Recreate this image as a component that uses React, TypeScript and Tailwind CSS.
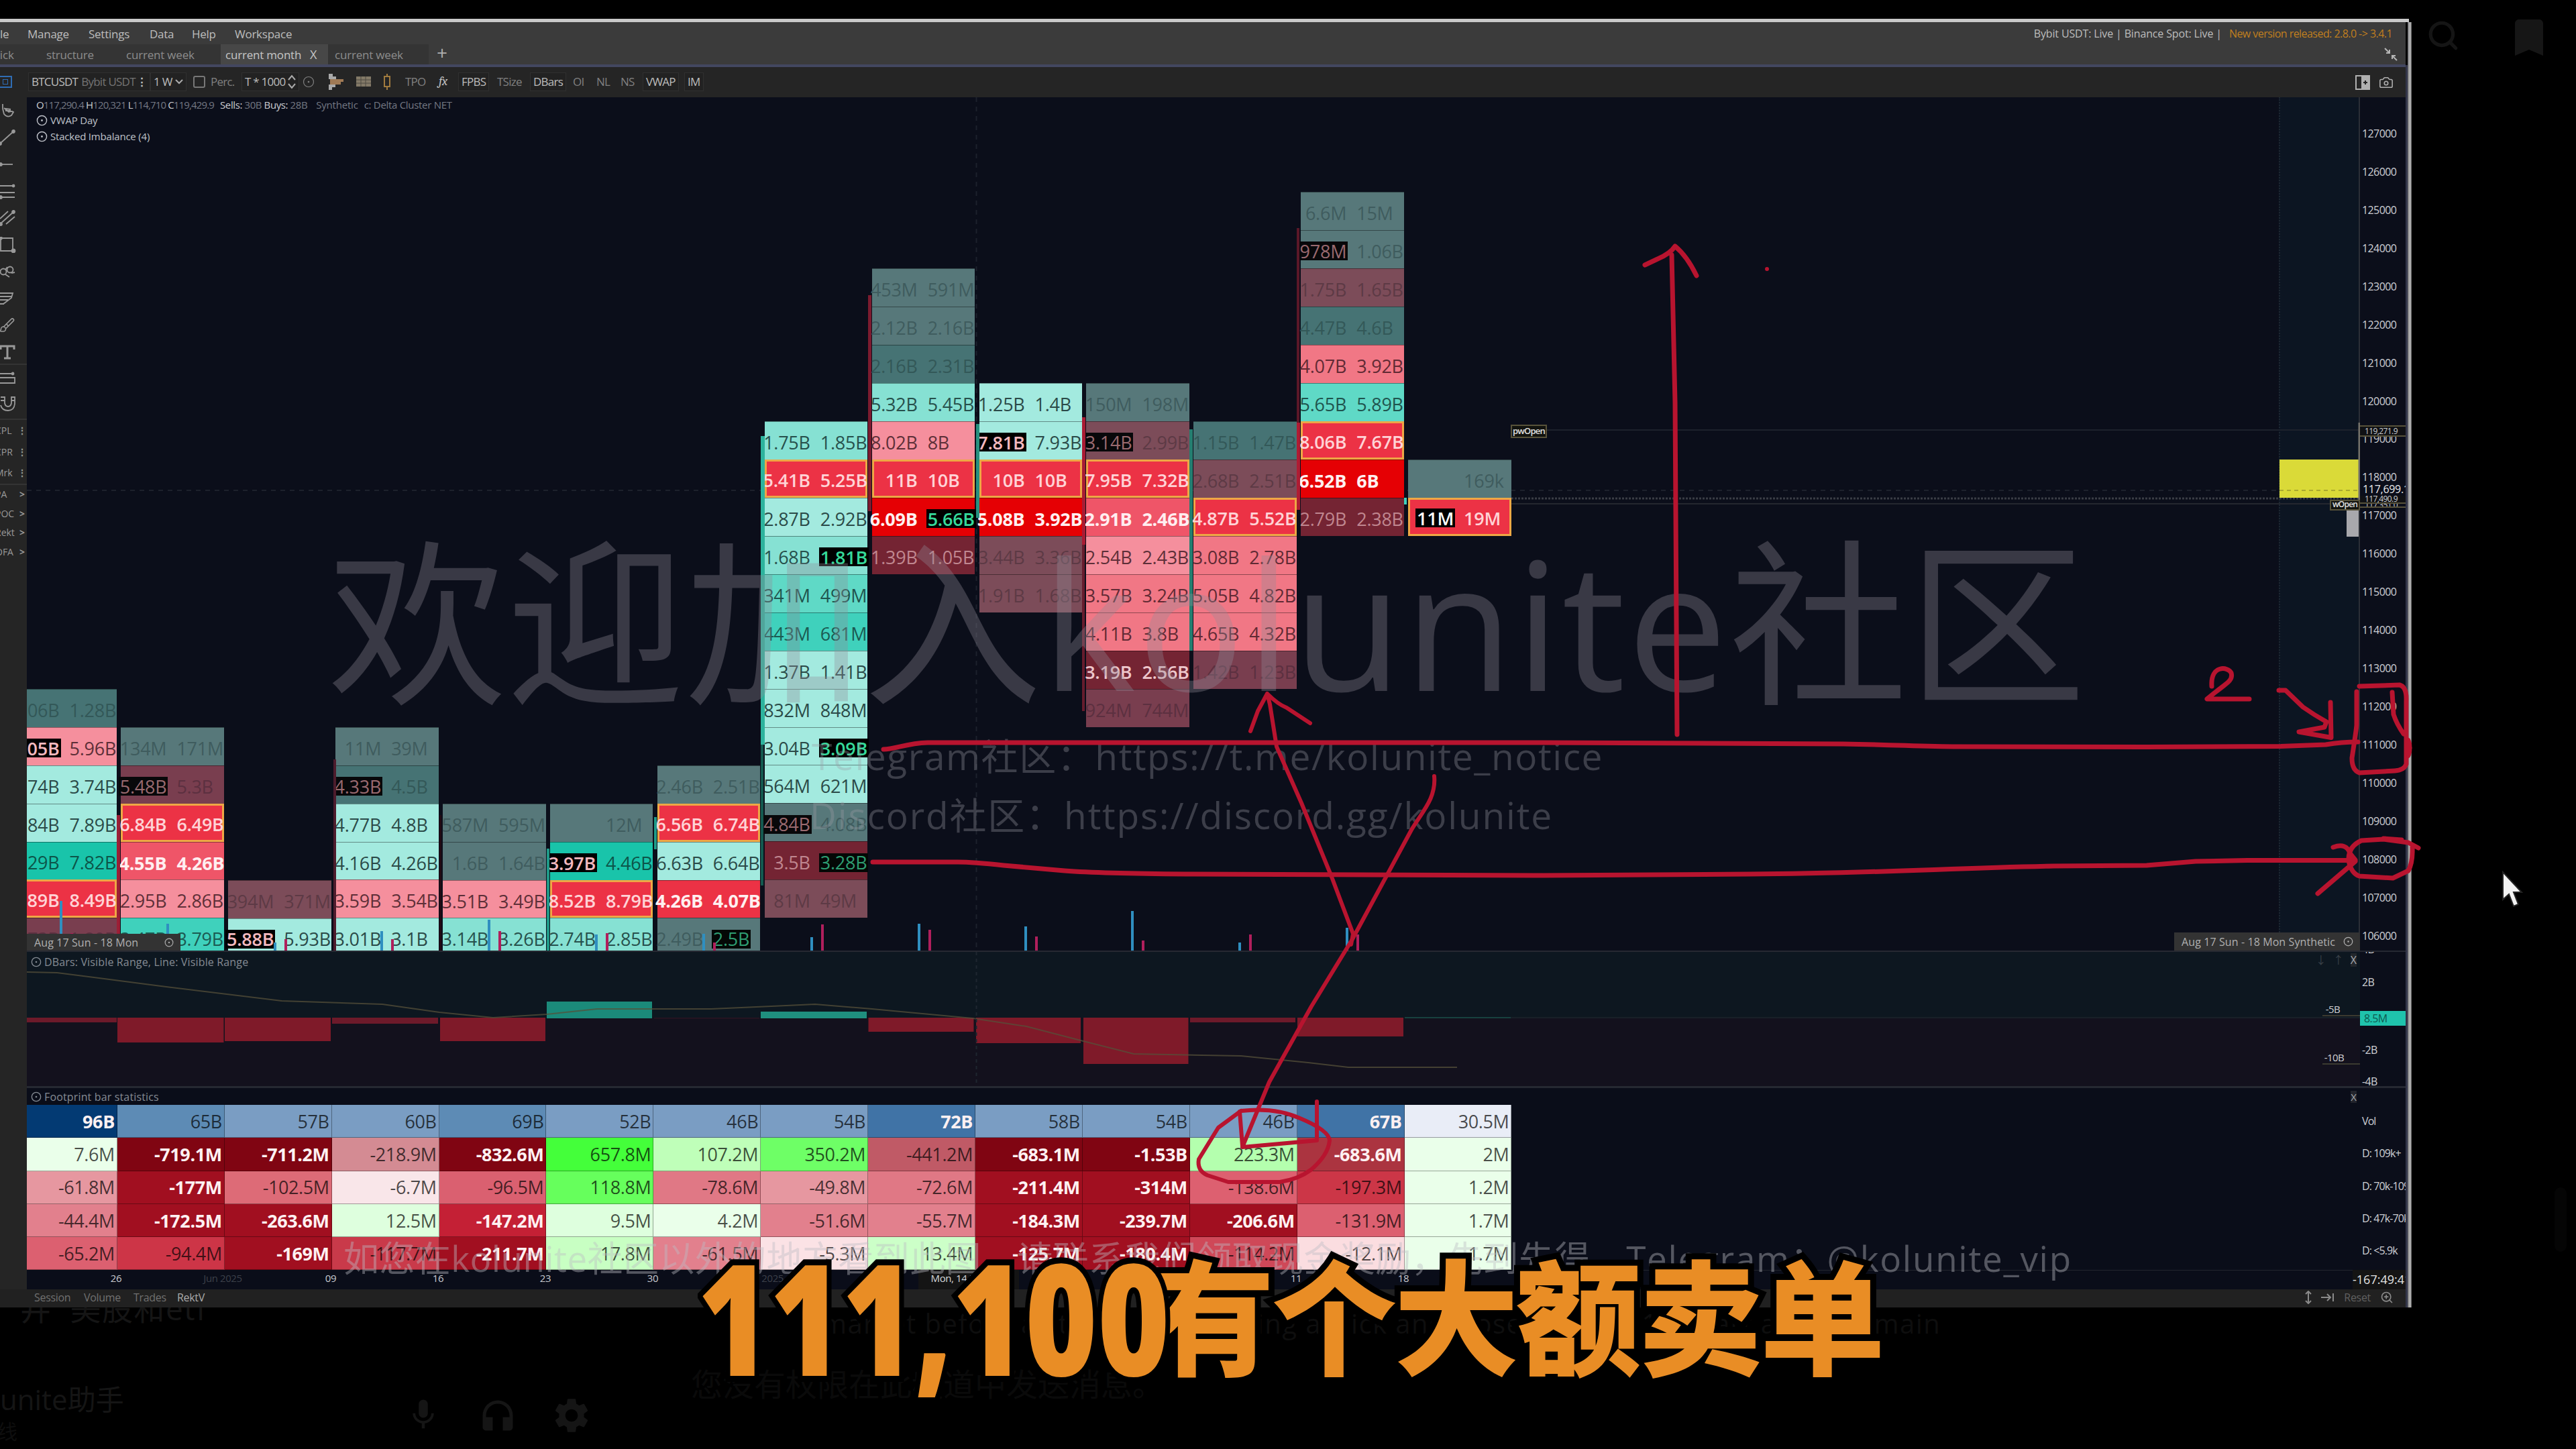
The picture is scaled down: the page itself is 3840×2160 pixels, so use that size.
import React from "react";
import { Search, Camera, CircleDot, Brush, ZoomIn } from "lucide-react";
import { MdMic, MdHeadphones, MdSettings, MdBookmark } from "react-icons/md";

/* ---------- footprint cells ---------- */

const KIND: Record<string, string> = {
  L: "bg-[#a3eadf] text-[#2b4a48]",
  T1: "bg-[#86e1d3] text-[#27504c]",
  T2: "bg-[#5fd9c6] text-[#1f544e]",
  T3: "bg-[#3fd1bc] text-[#1b5a52]",
  T: "bg-[#19c4aa] text-[#0c5549]",
  D: "bg-[#57787a] text-[#3f5c5e]",
  DT: "bg-[#467374] text-[#335858]",
  P: "bg-[#f58f9d] text-[#5e2f38]",
  P2: "bg-[#f17785] text-[#612a34]",
  R5: "bg-[#ef5568] text-[#ffeef0] font-bold",
  R: "bg-[#ec3245] text-[#ffd3d6] font-semibold border-[3px]! border-[#eea745]!",
  RB: "bg-[#ec3245] text-[#fff0f0] font-bold",
  X: "bg-[#e50004] text-[#fff0f0] font-bold",
  M: "bg-[#7c4c59] text-[#5d3a45]",
  M2: "bg-[#793e4f] text-[#5c3040]",
  DR: "bg-[#742433] text-[#c08790]",
  DB: "bg-[#742433] text-[#edc6cb] font-semibold",
};

const MARK: Record<string, string> = {
  k: "bg-black text-[#f3b9bf] font-semibold",
  d: "bg-[#08080a] text-[#9a6a70]",
  w: "bg-black text-white",
  g: "bg-black text-[#35d99a] font-semibold",
  h: "bg-[#040806] text-[#2e9e72]",
};

type Cell = [kind: string, sell: string, buy: string, sellMark?: string, buyMark?: string];
type Column = { row: number; cells: Cell[] };

const COLUMNS: Column[] = [
  { row: 13, cells: [["DT", "1.06B", "1.28B"], ["P", "6.05B", "5.96B", "k"], ["L", "3.74B", "3.74B"], ["L", "7.84B", "7.89B"], ["T", "7.29B", "7.82B"], ["R", "8.89B", "8.49B"], ["M2", "1.73B", "1.80B"]] },
  { row: 14, cells: [["D", "134M", "171M"], ["M2", "5.48B", "5.3B", "d"], ["R", "6.84B", "6.49B"], ["R5", "4.55B", "4.26B"], ["P", "2.95B", "2.86B"], ["T3", "3.47B", "3.79B"]] },
  { row: 18, cells: [["M", "394M", "371M"], ["L", "5.88B", "5.93B", "k"]] },
  { row: 14, cells: [["D", "11M", "39M"], ["DT", "4.33B", "4.5B", "d"], ["L", "4.77B", "4.8B"], ["L", "4.16B", "4.26B"], ["P", "3.59B", "3.54B"], ["L", "3.01B", "3.1B"]] },
  { row: 16, cells: [["D", "587M", "595M"], ["D", "1.6B", "1.64B"], ["P", "3.51B", "3.49B"], ["T1", "3.14B", "3.26B"]] },
  { row: 16, cells: [["D", "", "12M"], ["T", "3.97B", "4.46B", "k"], ["R", "8.52B", "8.79B"], ["T1", "2.74B", "2.85B"]] },
  { row: 15, cells: [["D", "2.46B", "2.51B"], ["R", "6.56B", "6.74B"], ["L", "6.63B", "6.64B"], ["RB", "4.26B", "4.07B"], ["D", "2.49B", "2.5B", "", "h"]] },
  { row: 6, cells: [["T1", "1.75B", "1.85B"], ["R", "5.41B", "5.25B"], ["L", "2.87B", "2.92B"], ["T1", "1.68B", "1.81B", "", "g"], ["T2", "341M", "499M"], ["T3", "443M", "681M"], ["L", "1.37B", "1.41B"], ["L", "832M", "848M"], ["L", "3.04B", "3.09B", "", "g"], ["L", "564M", "621M"], ["D", "4.84B", "4.08B", "d"], ["DR", "3.5B", "3.28B", "", "h"], ["M", "81M", "49M"]] },
  { row: 2, cells: [["D", "453M", "591M"], ["D", "2.12B", "2.16B"], ["DT", "2.16B", "2.31B"], ["T1", "5.32B", "5.45B"], ["P", "8.02B", "8B"], ["R", "11B", "10B"], ["X", "6.09B", "5.66B", "", "g"], ["DR", "1.39B", "1.05B"]] },
  { row: 5, cells: [["L", "1.25B", "1.4B"], ["L", "7.81B", "7.93B", "k"], ["R", "10B", "10B"], ["X", "5.08B", "3.92B"], ["M", "3.44B", "3.36B"], ["M", "1.91B", "1.68B"]] },
  { row: 5, cells: [["D", "150M", "198M"], ["M", "3.14B", "2.99B", "d"], ["R", "7.95B", "7.32B"], ["R5", "2.91B", "2.46B"], ["P", "2.54B", "2.43B"], ["P2", "3.57B", "3.24B"], ["P2", "4.11B", "3.8B"], ["DB", "3.19B", "2.56B"], ["M2", "924M", "744M"]] },
  { row: 6, cells: [["DT", "1.15B", "1.47B"], ["M", "2.68B", "2.51B"], ["R", "4.87B", "5.52B"], ["P2", "3.08B", "2.78B"], ["P2", "5.05B", "4.82B"], ["P2", "4.65B", "4.32B"], ["M2", "1.42B", "1.23B"]] },
  { row: 0, cells: [["D", "6.6M", "15M"], ["D", "978M", "1.06B", "d"], ["M", "1.75B", "1.65B"], ["DT", "4.47B", "4.6B"], ["P2", "4.07B", "3.92B"], ["T2", "5.65B", "5.89B"], ["R", "8.06B", "7.67B"], ["X", "6.52B", "6B"], ["DR", "2.79B", "2.38B"]] },
  { row: 7, cells: [["D", "", "169k"], ["R", "11M", "19M", "w"]] },
];

const ROW_H = 56.98;

function Num({ text, mark }: { text: string; mark?: string }) {
  return (
    <span className={`flex h-[28px] items-center whitespace-nowrap ${mark ? "px-[2px] -mx-[2px] " + MARK[mark] : ""}`}>{text}</span>
  );
}

function FootprintColumn({ col }: { col: Column }) {
  return (
    <div className="w-[153.5px] shrink-0" style={{ paddingTop: 140.9 + col.row * ROW_H }}>
      {col.cells.map(([kind, a, b, am, bm], i) => {
        const framed = kind === "R";
        return (
          <div key={i} style={{ height: ROW_H }} className={`flex items-center border-t-[1.5px] border-black/40 ${framed ? "pt-[4px]" : "pt-[5px]"} ${KIND[kind]}`}>
            <div className={`flex shrink-0 justify-end ${framed ? "w-[65px]" : "w-[68px]"}`}><Num text={a} mark={am} /></div>
            <div className="ml-[15px] flex"><Num text={b} mark={bm} /></div>
          </div>
        );
      })}
    </div>
  );
}

/* ---------- bar statistics ---------- */

type Stat = [value: string, color: string, bold?: 1];
const V = "#7a9dc3", DK = "#800512", B = "#a10f20", G = "#eaffea";
const STATS: Stat[][] = [
  [["96B", "#033a73", 1], ["65B", "#5d8bb5"], ["57B", V], ["60B", V], ["69B", "#5d8bb5"], ["52B", V], ["46B", V], ["54B", V], ["72B", "#4073a6", 1], ["58B", V], ["54B", V], ["46B", V], ["67B", "#4073a6", 1], ["30.5M", "#e9edf7"]],
  [["7.6M", G], ["-719.1M", DK, 1], ["-711.2M", DK, 1], ["-218.9M", "#d48b93"], ["-832.6M", DK, 1], ["657.8M", "#44ff3a"], ["107.2M", "#bfffb9"], ["350.2M", "#6eff66"], ["-441.2M", "#c05a66"], ["-683.1M", DK, 1], ["-1.53B", DK, 1], ["223.3M", "#b4ffae"], ["-683.6M", "#ab3440", 1], ["2M", G]],
  [["-61.8M", "#e697a0"], ["-177M", B, 1], ["-102.5M", "#dd6b77"], ["-6.7M", "#f9e6e9"], ["-96.5M", "#da6070"], ["118.8M", "#66ff5c"], ["-78.6M", "#e07885"], ["-49.8M", "#e697a0"], ["-72.6M", "#e07885"], ["-211.4M", B, 1], ["-314M", B, 1], ["-138.6M", "#dd6070"], ["-197.3M", "#cc3647"], ["1.2M", G]],
  [["-44.4M", "#e2808d"], ["-172.5M", B, 1], ["-263.6M", B, 1], ["12.5M", "#deffde"], ["-147.2M", "#c42035", 1], ["9.5M", "#deffde"], ["4.2M", G], ["-51.6M", "#e2808d"], ["-55.7M", "#e2808d"], ["-184.3M", B, 1], ["-239.7M", B, 1], ["-206.6M", B, 1], ["-131.9M", "#dc6070"], ["1.7M", G]],
  [["-65.2M", "#dc6070"], ["-94.4M", "#cd3547"], ["-169M", B, 1], ["-117.7M", "#c93a4a"], ["-211.7M", B, 1], ["17.8M", "#c8ffc3"], ["-61.5M", "#e2808d"], ["-5.3M", "#fbe2e5"], ["13.4M", "#ccffc8"], ["-125.7M", B, 1], ["-180.4M", B, 1], ["-114.2M", "#cf4858"], ["-12.1M", "#fbdde0"], ["1.7M", G]],
];

/* ---------- small helpers ---------- */

/** A text row whose items start at the given offsets. */
function Row({ items, className = "", end = 1400 }: { items: [number, React.ReactNode, string?][]; className?: string; end?: number }) {
  const start = items[0][0];
  return (
    <div className={`flex items-center whitespace-nowrap ${className}`} style={{ marginLeft: start }}>
      {items.map(([x, node, cls], i) => (
        <div key={i} className={`flex shrink-0 items-center ${cls ?? ""}`} style={{ width: (items[i + 1]?.[0] ?? end) - x }}>{node}</div>
      ))}
    </div>
  );
}

function Boxed({ children, className = "" }: { children: React.ReactNode; className?: string }) {
  return <span className={`-ml-[5px] flex h-[28px] items-center border border-[#303030] bg-[#222222] px-[4px] text-[#bcbcbc] ${className}`}>{children}</span>;
}

/* drawing tools of the left rail, each in a 24 x 24 box cut by the window's left edge */
const TOOLS: React.ReactNode[] = [
  <path key="hand" d="M4 2v7M4 9l2 8q5 6 11 2l3-5q-3-2-7 0L6 8M8 9l8 1M8 12l8 0" />,
  <g key="line"><path d="M0 21L20 3" /><circle cx="20" cy="3" r="2" fill="currentColor" /><circle cx="0" cy="21" r="2" fill="currentColor" /></g>,
  <g key="ray"><path d="M0 12H19" /><circle cx="1" cy="12" r="2" fill="currentColor" /></g>,
  <g key="levels"><path d="M0 4H22M0 14H22M0 21H22" /><circle cx="20" cy="4" r="1.500" fill="currentColor" /><circle cx="1" cy="21" r="2" fill="currentColor" /></g>,
  <g key="channel"><path d="M0 13L12 2M0 21L20 3M9 21L22 10" /><circle cx="20" cy="3" r="2" fill="currentColor" /><circle cx="1" cy="21" r="2" fill="currentColor" /></g>,
  <g key="rect"><path d="M1 2H19V21H1Z" /><circle cx="1" cy="2" r="2" fill="currentColor" /><circle cx="20" cy="21" r="2.500" fill="currentColor" /></g>,
  <g key="spline"><circle cx="5" cy="12" r="4.500" /><circle cx="15" cy="9" r="4.500" /><path d="M8 16L14 20M17 14L22 13M11 5L8 9" /></g>,
  <path key="wedge" d="M0 4H19L17 11L5 20H0M0 9H18M0 14H12M0 20H6" />,
  null,
  <path key="text" d="M1 8V3H21V8M11 3V21M6 21H16" strokeWidth="3" />,
];

function Tool({ children, className = "" }: { children: React.ReactNode; className?: string }) {
  return (
    <div className={`flex items-center ${className}`}>
      <svg width="24" height="24" viewBox="0 0 24 24" fill="none" stroke="currentColor" strokeWidth="1.8">{children}</svg>
    </div>
  );
}

function SideBar() {
  return (
    <div className="flex w-[40px] shrink-0 flex-col overflow-hidden bg-[#252525] text-[14px] font-medium text-[#999999]">
      {TOOLS.map((t, i) =>
        t ? <Tool key={i} className="h-[40px]">{t}</Tool> : <div key={i} className="-ml-[2px] flex h-[40px] items-center"><Brush width={25} height={24} strokeWidth={1.6} /></div>
      )}
      <div className="-mt-[3px] mb-[1px] h-[2px] bg-[#343434]" />
      <Tool className="h-[38px]"><path d="M0 5H19M0 11H22V19H0" /><circle cx="19" cy="5" r="1.500" fill="currentColor" /></Tool>
      <Tool className="h-[38px]"><path d="M1 2H7V11Q8 16 12 16Q16 16 17 11V2H22V12Q21 22 12 22Q3 22 1 14M1 7H7M17 7H22" /></Tool>
      <div className="mt-[3px] h-[2px] bg-[#343434]" />
      {["CPL", "CPR", "Mrk"].map((t) => (
        <div key={t} className="-ml-[7px] flex h-[31.5px] items-center whitespace-nowrap"><span className="w-[33px]">{t}</span><b>⋮</b></div>
      ))}
      <div className="h-[2px] bg-[#343434]" />
      {["PA", "POC", "Rekt", "OFA"].map((t) => (
        <div key={t} className="-ml-[7px] flex h-[28.5px] items-center whitespace-nowrap"><span className="w-[36px]">{t}</span><b>&gt;</b></div>
      ))}
    </div>
  );
}

/* ---------- panels ---------- */

const WICKS: [number, number, number, number, string][] = [
  [174, 1215, 5, 202, "#9c1f36"], [497, 1132, 4, 285, "#4d1c2c"], [815, 1265, 4, 152, "#1f9a88"], [975, 1218, 4, 48, "#1f9a88"],
  [1134, 650, 6, 460, "#2db39d"], [1134, 1110, 4, 210, "#14594f"], [1294, 440, 5, 322, "#7c1b2f"], [1455, 632, 5, 140, "#27907f"], [1613, 622, 5, 190, "#a81c34"], [1613, 812, 4, 248, "#661c2d"],
  [1773, 640, 5, 330, "#257e70"], [1933, 340, 4, 290, "#5b1828"], [1933, 630, 5, 130, "#b01c33"], [2093, 742, 4, 10, "#3fd1bc"], [655, 1215, 3, 202, "#220a14"],
];

const TICKS: [number, number, number][] = [
  [91, 1343, 1391], [250, 1377, 1410], [410, 1405, 1400], [569, 1388, 1400], [729, 1371, 1388], [889, 1393, 1391], [1049, 1392, 1405],
  [1210, 1397, 1378], [1370, 1377, 1386], [1529, 1381, 1396], [1688, 1358, 1402], [1848, 1405, 1393], [2008, 1383, 1393],
];

function Lead({ children }: { children: React.ReactNode }) {
  return <b className="font-medium text-[#cbcdd2]">{children}</b>;
}

function Chart() {
  return (
    <div className="relative h-[1272px] overflow-hidden bg-[#0b0e1a]">
      <div className="absolute right-0 top-0 h-full w-[121px] border-l-2 border-dotted border-[#1d2631] bg-[#0c1522]" />
      <svg className="absolute inset-0" width="3478" height="1272" viewBox="40 145 3478 1272">
        <g stroke="#1d212c" strokeWidth="2">
          <path d="M40 731H3518" strokeDasharray="7 7" />
          <path d="M2253 743H3518" stroke="#3a3d45" strokeWidth="3" strokeDasharray="3 2" />
          <path d="M2253 751H3518" stroke="#24272f" />
          <path d="M2305 641H3518" />
          <path d="M1455.500 145V1417" strokeDasharray="7 7" />
        </g>
      </svg>
      <div className="absolute left-[-19.500px] top-0 flex gap-[6.400px] text-[27px] font-medium leading-none tracking-[-0.25px]">
        {COLUMNS.map((c, i) => <FootprintColumn key={i} col={c} />)}
      </div>
      <svg className="absolute inset-0" width="3478" height="1272" viewBox="40 145 3478 1272">
        {WICKS.map(([x, y, w, h, c], i) => <rect key={i} x={x} y={y} width={w} height={h} fill={c} />)}
        {TICKS.map(([x, a, b], i) => (
          <g key={i}>
            <rect x={x - 2} y={a} width="4" height={1417 - a} fill="#2f8fc0" />
            <rect x={x + 14} y={b} width="4" height={1417 - b} fill="#b01f5c" />
          </g>
        ))}
        <rect x="3398" y="685" width="120" height="57" fill="#dada38" />
        <path d="M3398 731H3518" stroke="#a9a92e" strokeWidth="2" strokeDasharray="6 5" />
        <rect x="3498" y="758" width="20" height="42" fill="#a8a8ac" />
        <path d="M3517 145V1417" stroke="#2b2e36" strokeWidth="2" />
        <path d="M3517 630V760" stroke="#75726a" strokeWidth="3" />
      </svg>
      <div className="absolute left-[2212px] top-[488px] flex h-[20px] w-[54px] items-center justify-center border-2 border-[#57523a] bg-[#12130f] pb-[2px] text-[13px] font-semibold leading-none tracking-[-0.8px] text-[#e0e0e0]">pwOpen</div>
      <div className="absolute right-0 top-[600px] flex h-[16px] w-[45px] items-center justify-center border-2 border-[#57523a] bg-[#12130f] pb-[2px] text-[12px] font-semibold leading-none tracking-[-0.8px] text-[#e0e0e0]">wOpen</div>
      <div className="absolute left-[14px] top-0 text-[15px] font-medium leading-[24px] tracking-[-0.2px] text-[#bfc2c9]">
        <div className="flex h-[22px] items-center gap-[5px] tracking-[-0.85px] text-[#747883]">
          <span><Lead>O</Lead>117,290.4 <Lead>H</Lead>120,321 <Lead>L</Lead>114,710 <Lead>C</Lead>119,429.9</span>
          <span className="ml-[4px] tracking-[-0.4px]"><Lead>Sells:</Lead> 30B <Lead>Buys:</Lead> 28B</span>
          <span className="ml-[8px] tracking-[-0.2px]">Synthetic</span><span className="ml-[4px] tracking-[-0.3px]">c: Delta Cluster NET</span>
        </div>
        <div className="flex items-center gap-[4px]"><CircleDot size={17} /> VWAP Day</div>
        <div className="flex items-center gap-[4px]"><CircleDot size={17} /> Stacked Imbalance (4)</div>
      </div>
      <div className="absolute bottom-0 left-0 flex h-[25px] w-[229px] items-center justify-between bg-[#333333] pl-[11px] pr-[10px] text-[16px] font-medium tracking-[0.1px] text-[#b0b0b0]">Aug 17 Sun - 18 Mon <CircleDot size={14} /></div>
      <div className="absolute bottom-0 right-0 flex h-[27px] w-[277px] items-center justify-between bg-[#333333] pl-[11px] pr-[10px] text-[16px] font-medium tracking-[0.1px] text-[#b0b0b0]">Aug 17 Sun - 18 Mon Synthetic <CircleDot size={15} /></div>
    </div>
  );
}

const DELTA: [number, number, number, number, string][] = [
  [40, 1517, 134, 7, "#6d1a2a"], [175, 1517, 158.500, 37, "#7f1a29"], [335, 1517, 158, 35, "#7f1a29"], [495, 1517, 158, 9, "#6d1a2a"], [656, 1517, 157, 35, "#7f1a29"],
  [815, 1493, 157, 25, "#1b8a7a"], [1134, 1508, 158, 10, "#1f8f7f"], [1294.500, 1517, 157, 21, "#7f1a29"], [1455, 1517, 156, 38, "#7f1a29"], [1615, 1517, 156.500, 69, "#7f1a29"],
  [1774, 1517, 157, 7, "#6d1a2a"], [1934, 1517, 158, 28, "#7f1a29"], [2094, 1516, 158, 2, "#17413f"], [975, 1517, 157, 1.500, "#2a1522"],
];

function DeltaPanel() {
  return (
    <div className="relative h-[200px] overflow-hidden bg-[linear-gradient(#0d1720_49%,#13111d_49%)]">
      <svg className="absolute inset-0" width="3478" height="200" viewBox="40 1419 3478 200">
        {DELTA.map(([x, y, w, h, c], i) => <rect key={i} x={x} y={y} width={w} height={h} fill={c} />)}
        <path d="M40 1449L85 1450L140 1457L240 1470L420 1492L570 1497L655 1509L735 1517L815 1512L890 1504L1060 1504L1150 1500L1215 1497L1300 1504L1450 1518L1530 1530L1611 1551L1690 1571L1850 1574L1950 1584L2010 1591H2172" fill="none" stroke="#55503a" strokeWidth="2" opacity=".75" />
        <path d="M1455.500 1419V1619" stroke="#1f2630" strokeWidth="2" strokeDasharray="5 5" />
        <path d="M2252 1517H3518" stroke="#182028" strokeWidth="2" />
        <path d="M3462 1514H3518M3462 1586H3518" stroke="#3b3a30" strokeWidth="2" />
      </svg>
      <div className="absolute left-[6px] top-[3px] flex items-center gap-[4px] text-[16px] font-medium leading-[24px] tracking-[0.15px] text-[#858b93]"><CircleDot size={16} /> DBars: Visible Range, Line: Visible Range</div>
      <div className="absolute right-[30px] top-[76px] text-[15px] font-medium leading-[18px] tracking-[-0.6px] text-[#d0d0d4]">-5B</div>
      <div className="absolute right-[24px] top-[148px] text-[15px] font-medium leading-[18px] tracking-[-0.6px] text-[#d0d0d4]">-10B</div>
      <div className="absolute right-[5px] top-[2px] flex gap-[10px] text-[16px] leading-[20px] text-[#3a4148]"><span>↓</span><span>↑</span><span className="bg-[#22272c] text-[#a5a8ac]">X</span></div>
    </div>
  );
}

function StatsPanel() {
  return (
    <div className="h-[271px] overflow-hidden bg-[#0a0d19]">
      <div className="flex h-[25px] items-center justify-between pl-[6px] pr-[5px] text-[16px] font-medium tracking-[0.15px] text-[#858b93]">
        <span className="flex items-center gap-[4px]"><CircleDot size={16} /> Footprint bar statistics</span>
        <span className="bg-[#22242c] text-[15px] leading-[18px] text-[#a5a8ac]">X</span>
      </div>
      <div className="ml-[-25px] grid w-[2238.500px] grid-cols-14 text-[27px] font-medium leading-none tracking-[-0.4px]">
        {STATS.flatMap((r, y) => r.map(([t, c, bold], x) => (
          <div key={`${y}-${x}`} className={`flex h-[49.300px] items-center justify-end border-b border-r border-black/35 pr-[3px] ${bold ? "font-bold text-[#fff1f2]" : "text-black/70"}`} style={{ backgroundColor: c }}>{t}</div>
        )))}
      </div>
    </div>
  );
}

const DATES: [number, string, string][] = [
  [173, "26", "text-[#c8cad0]"], [332, "Jun 2025", "text-[#3c4049]"], [493, "09", "text-[#c8cad0]"], [653, "16", "text-[#c8cad0]"], [813, "23", "text-[#c8cad0]"],
  [973, "30", "text-[#c8cad0]"], [1142, "Jul 2025", "text-[#3c4049]"], [1444, "Mon, 14 Jul 00:00", "text-[#d5d7db]"], [1613, "21", "text-[#c8cad0]"], [1773, "28", "text-[#c8cad0]"], [1932, "11", "text-[#c8cad0]"], [2092, "18", "text-[#c8cad0]"],
];

function DateAxis() {
  return (
    <div className="relative h-[29px] bg-[#0a0d19] text-[15px] font-medium leading-[24px] tracking-[-0.4px]">
      <div className="absolute right-0 top-0 h-px w-[1265px] bg-[#23262e]" />
      <div className="absolute left-[1329px] top-0 h-[29px] w-[150px] bg-[#141414]" />
      {DATES.map(([x, t, c]) => (
        <span key={x} className={`absolute -translate-x-1/2 whitespace-nowrap ${c}`} style={{ left: x - 40 }}>{t}</span>
      ))}
    </div>
  );
}

function PriceAxis() {
  const prices = Array.from({ length: 22 }, (_, i) => 127000 - i * 1000);
  return (
    <div className="w-[68px] shrink-0 bg-[#0b0e1a] text-[16px] font-medium leading-none tracking-[-0.6px] text-[#cdcfd4]">
      <div className="relative h-[1272px] overflow-hidden pt-[25.500px]">
        {prices.map((p) => <div key={p} style={{ height: 56.95 }} className="flex items-center pl-[3px]">{p}</div>)}
        <div className="absolute left-0 top-[489px] flex h-[17px] w-full items-center border-y-2 border-[#57523a] bg-[#101114] pl-[7px] text-[12px]">119,271.9</div>
        <div className="absolute left-0 top-[576px] flex h-[18px] w-full items-center overflow-hidden bg-[#0b0e1a] pb-[2px] pl-[4px] text-[16px] tracking-[-0.3px] text-[#e8e8ea]">117,699.1</div>
        <div className="absolute left-0 top-[594px] flex h-[12px] w-full items-center border-b-2 border-[#57523a] bg-[#101114] pl-[7px] text-[12px]">117,490.9</div>
        <div className="absolute left-0 top-[606px] flex h-[6px] w-full items-center overflow-hidden border-b-2 border-[#57523a] pl-[7px] text-[12px]">117,351.0</div>
      </div>
      <div className="h-[2px] bg-[#262932]" />
      <div className="relative h-[200px] overflow-hidden">
        <div className="-mt-[12px] h-[62px] pl-[3px]">4B</div>
        <div className="-mt-[13px] h-[50px] pl-[3px]">2B</div>
        <div className="mt-px flex h-[22px] items-center bg-[#1fc3ac] pb-px pl-[6px] text-[#0e5a50]">8.5M</div>
        <div className="mt-[28px] h-[47px] pl-[3px]">-2B</div>
        <div className="pl-[3px]">-4B</div>
      </div>
      <div className="h-[3px] bg-[#262932]" />
      <div className="flex h-[271px] flex-col whitespace-nowrap pl-[3px] pt-[25px] tracking-[-0.9px]">
        {["Vol", "D: 109k+", "D: 70k-109k", "D: 47k-70k", "D: <5.9k"].map((t) => <div key={t} className="flex h-[48.300px] items-center">{t}</div>)}
      </div>
      <div className="relative -ml-[11px] flex h-[29px] w-[79px] items-center overflow-hidden whitespace-nowrap bg-[#141414] pb-[2px] text-[18px] tracking-[0px] text-[#e2e2e2]">-167:49:41</div>
    </div>
  );
}

/* ---------- marker strokes drawn over the screen ---------- */

function Strokes() {
  return (
    <svg className="absolute inset-0" width="3840" height="2160" viewBox="0 0 3840 2160" fill="none" stroke="#b8142f" strokeLinecap="round" strokeLinejoin="round">
      <g strokeWidth="7">
        <path d="M1317 1117C1335 1117 1350 1108 1383 1107H2300C2450 1107 2600 1108 2748 1109C2830 1110 2860 1113 2920 1113L3200 1113.600L3400 1112.500L3467 1110Q3490 1106 3515 1106" />
        <path d="M1301 1285H1428Q1450 1285 1496 1290L1587 1298Q1640 1302 1767 1303L2300 1305L2608 1303C2800 1302 2900 1294 3061 1291L3200 1290L3273 1284L3350 1282.500H3510" />
        <path d="M2492 380L2497 600L2500 1095M2452 395L2471 386Q2490 378 2497 367Q2515 382 2529 411" />
        <path d="M3297 1023C3295 990 3322 994 3326 1003C3330 1016 3315 1020 3290 1042L3353 1042" />
        <path d="M3397 1029H3407L3433 1054Q3450 1066 3468 1076L3465 1084L3427 1091L3475 1099.500L3474 1047" />
        <path d="M3517 1023L3577 1021Q3588 1024 3587 1045V1139Q3584 1148 3570 1149L3517 1152Q3506 1148 3506 1130Q3513 1085 3513 1080V1031M3566 1032L3568 1065Q3573 1080 3583 1094" />
        <path d="M3605 1264L3590 1256L3553 1251L3520 1253Q3500 1262 3501 1283Q3505 1302 3517 1306L3567 1309L3590 1298Q3597 1286 3596 1262M3553 1250L3580 1252" />
        <path d="M3478 1263Q3498 1256 3503 1272L3511 1282M3455 1332L3511 1284" />
      </g>
      <g strokeWidth="6">
        <path d="M2014 1408L2017 1392L1985 1307L1940 1197L1903 1113L1893 1050L1889 1034M1864 1090L1875 1060L1889 1034Q1905 1050 1918 1055L1953 1078" />
        <path d="M2138 1157C2141 1190 2120 1210 2104 1237L2016 1400L1955 1500L1892 1613L1852 1710L1963 1700V1642M1848 1657L1852 1708" />
        <path d="M1850 1656L1816 1681L1787 1728Q1784 1745 1800 1752L1831 1762H1908Q1935 1758 1954 1744Q1980 1722 1982 1700Q1981 1685 1938 1667Q1900 1650 1850 1656" />
      </g>
      <ellipse cx="3590" cy="1115" rx="5" ry="15" fill="#b8142f" />
      <circle cx="2634" cy="401" r="2" fill="#b8142f" strokeWidth="2" />
    </svg>
  );
}

export default function App() {
  return (
    <div className="relative h-[2160px] w-[3840px] overflow-hidden bg-black pt-[28px] [font-family:'Open_Sans','Noto_Sans_CJK_SC',sans-serif]">
      <div className="relative h-[1921px] w-[3595px] overflow-hidden">
        {/* title bar and tabs */}
        <div className="h-[5px] w-[3591px] bg-[#c9c9c9]" />
        <div className="flex">
          <div className="w-[3586px] shrink-0">
            <div className="flex h-[33px] items-center justify-between bg-[#3b3b3b] pb-[2px] text-[17px] font-medium leading-none tracking-[-0.25px] text-[#bdbdbd]">
              <Row className="pt-[4px]" items={[[0, "le"], [41, "Manage"], [132, "Settings"], [223, "Data"], [286, "Help"], [350, "Workspace"]]} end={500} />
              <div className="flex pr-[20px] pt-[2px] text-[16px] tracking-[-0.15px]">Bybit USDT: Live | Binance Spot: Live |<span className="ml-[11px] tracking-[-0.55px] text-[#c07f1e]">New version released: 2.8.0 -&gt; 3.4.1</span></div>
            </div>
            <div className="flex h-[30px] bg-[#3b3b3b] text-[17px] font-medium leading-none tracking-[-0.2px] text-[#8c8c8c]">
              <div className="flex w-[329px] items-center bg-[#343434]"><span className="-ml-[6px] w-[75px]">tick</span><span className="w-[119px]">structure</span><span>current week</span></div>
              <div className="flex w-[160px] items-center bg-[#474747] pl-[7px] text-[#c6c6c6]"><span className="w-[126px]">current month</span><span className="text-[18px]">X</span></div>
              <div className="flex w-[150px] items-center bg-[#343434] pl-[10px]">current week</div>
              <div className="flex items-center pb-[6px] pl-[12px] text-[28px] text-[#b0b0b0]">+</div>
              <div className="ml-auto flex items-center pr-[12px]">
                <svg width="20" height="20" viewBox="0 0 20 20" fill="none" stroke="#b5b5b5" strokeWidth="2"><path d="M1 1L8 8M8 3V8H3M19 19L12 12M12 17V12H17" /></svg>
              </div>
            </div>
            <div className="h-[4px] bg-[#434760]" />
            {/* toolbar */}
            <div className="flex h-[45px] items-center justify-between bg-[#252525] text-[17px] font-medium leading-none tracking-[-0.75px] text-[#808080]">
              <Row className="-mt-[2px]" end={1100} items={[
                [0, <span className="mr-auto flex h-[18px] w-[18px] items-center border-2 border-l-0 border-[#2f6db5]"><i className="ml-1 h-2 w-2 border border-[#2f6db5]" /></span>],
                [47, <Boxed>BTCUSDT <span className="ml-[5px] w-[82px] text-[#747474]">Bybit USDT</span><b>⋮</b></Boxed>],
                [229, <Boxed>1 W <svg className="ml-[4px]" width="12" height="8"><path d="M1 1L6 6L11 1" fill="none" stroke="#aaa" strokeWidth="2" /></svg></Boxed>],
                [288, <i className="h-[18px] w-[18px] rounded-[3px] border-2 border-[#777]" />],
                [314, "Perc."],
                [365, <Boxed><span className="w-[64px] whitespace-nowrap">T * 1000</span><svg width="12" height="22"><path d="M1 8L6 2L11 8M1 14L6 20L11 14" fill="none" stroke="#aaa" strokeWidth="2" /></svg></Boxed>],
                [451, <CircleDot size={18} strokeWidth={1.6} />],
                [489, <svg width="24" height="24"><path d="M1 0h6v4h5v4H1zM1 16h10v4H6v4H1z" fill="#a9a9a9" /><path d="M3 8h20v4h-4v4H3z" fill="#a07a55" /></svg>],
                [531, <svg width="22" height="16"><rect width="22" height="15" fill="#837a68" /><path d="M0 5h22M0 10h22M7 0v15M14 0v15" stroke="#4e4a42" /></svg>],
                [571, <svg width="12" height="24"><path d="M6 0v24" stroke="#a07a3e" strokeWidth="2" /><rect x="2" y="4" width="8" height="15" fill="#252525" stroke="#a07a3e" strokeWidth="2" /></svg>],
                [604, "TPO"], [654, <i className="font-serif text-[19px] text-[#c0c0c0]">fx</i>],
                [688, <Boxed>FPBS</Boxed>], [741, "TSize"], [795, <Boxed>DBars</Boxed>], [854, "OI"], [889, "NL"], [925, "NS"], [963, <Boxed>VWAP</Boxed>], [1025, <Boxed>IM</Boxed>],
              ]} />
              <div className="flex gap-[10px] pr-[16px] text-[#b0b0b0]">
                <svg width="24" height="22" viewBox="0 0 24 22" fill="none" stroke="currentColor" strokeWidth="2"><rect x="2" y="1" width="20" height="20" /><path d="M11 2H21V20H11Z" fill="currentColor" /><path d="M13 11H19M16 8V14" stroke="#252525" /></svg>
                <Camera width={26} height={22} strokeWidth={1.7} />
              </div>
            </div>
            {/* panels */}
            <div className="flex h-[1777px]">
              <SideBar />
              <div className="w-[3478px] shrink-0">
                <Chart />
                <div className="h-[2px] bg-[#262932]" />
                <DeltaPanel />
                <div className="h-[3px] bg-[#262932]" />
                <StatsPanel />
                <DateAxis />
              </div>
              <PriceAxis />
            </div>
            <div className="flex h-[27px] items-center justify-between bg-[#212121] pb-[4px] text-[16px] font-medium leading-none tracking-[-0.3px] text-[#707070]">
              <Row end={400} items={[[51, "Session"], [125, "Volume"], [199, "Trades"], [264, <span className="text-[#ababab]">RektV</span>]]} />
              <div className="flex items-center gap-[14px] pr-[18px] text-[#8a8a8a]">
                <svg width="10" height="20" viewBox="0 0 10 20" fill="none" stroke="currentColor" strokeWidth="2"><path d="M5 2V18M1 5L5 1L9 5M1 15L5 19L9 15" /></svg>
                <svg width="20" height="14" viewBox="0 0 20 14" fill="none" stroke="currentColor" strokeWidth="2"><path d="M0 7H14M9 2L14 7L9 12M18 1V13" /></svg>
                <span className="text-[#606060]">Reset</span><ZoomIn size={20} />
              </div>
            </div>
          </div>
          <div className="relative mt-[64px] h-[1852px] w-[3px] shrink-0 bg-[#33364a]" />
          <div className="relative h-[1916px] w-[6px] shrink-0 bg-[linear-gradient(90deg,#55565a,#adadad_35%,#adadad_75%,#505050)]" />
        </div>
      </div>

      {/* watermark */}
      <div className="absolute left-[489px] top-[727px] whitespace-nowrap text-[266px] leading-[400px] text-[#938e98]/34">欢迎加入<span className="tracking-[2.500px]">kolunite</span>社区</div>
      <div className="absolute left-[1210px] top-[1087px] whitespace-nowrap text-[55px] leading-[80px] tracking-[1.600px] text-[#9c9aa4]/34">Telegram社区：https://t.me/kolunite_notice</div>
      <div className="absolute left-[1207px] top-[1175px] whitespace-nowrap text-[55px] leading-[80px] tracking-[1.850px] text-[#9c9aa4]/34">Discord社区：https://discord.gg/kolunite</div>
      <div className="absolute left-[512px] top-[1836px] whitespace-nowrap text-[53px] leading-[80px] tracking-[0.400px] text-[#bdbdc4]/42">如您在kolunite社区以外的地方看到此图，请联系我们领取现金奖励，先到先得。<span className="tracking-[1.700px]">Telegram：@kolunite_vip</span></div>

      {/* application behind the window */}
      <div className="absolute left-0 top-[1949px] h-[211px] w-[3840px] overflow-hidden text-[#151515]">
        <div className="absolute left-[30px] top-[-24px] text-[46px] leading-[50px] tracking-[1.500px]">井&nbsp; 美股和etf</div>
        <div className="absolute left-0 top-[112px] text-[42px] leading-[50px]">unite助手</div>
        <div className="absolute left-[-4px] top-[165px] text-[30px] leading-[40px] text-[#0e0e0e]">线</div>
        <MdMic className="absolute left-[604px] top-[133px]" size={54} />
        <MdHeadphones className="absolute left-[712px] top-[131px]" size={60} />
        <MdSettings className="absolute left-[821px] top-[130px]" size={62} />
        <div className="absolute left-[1225px] top-[0px] whitespace-nowrap text-[40px] leading-[48px] tracking-[1.400px] text-[#0e0e0e]">market before a strong move, bring a wick and close then on 1h chart again in main</div>
        <div className="absolute left-[1030px] top-[86px] text-[47px] leading-[56px] text-[#0a0a0a]">您没有权限在此频道中发送消息。</div>
      </div>
      <Search className="absolute left-[3617px] top-[28px] text-[#151515]" size={50} strokeWidth={2.500} />
      <MdBookmark className="absolute left-[3734px] top-[20px] text-[#161616]" size={72} />
      <div className="absolute left-[3808px] top-[1770px] h-[96px] w-[18px] rounded-full bg-[#050505]" />

      <Strokes />

      {/* subtitle */}
      <div className="absolute left-[1040px] top-[1815px] flex h-[280px] whitespace-nowrap font-extrabold text-[#e98d25] [-webkit-text-stroke:18px_#000] [paint-order:stroke_fill]">
        <span className="block w-[674px] origin-left scale-x-[0.8] text-[230px] leading-[294px]">111,100</span>
        <span className="text-[186px] leading-[280px] tracking-[-4px] font-black [font-family:'Noto_Sans_CJK_SC',sans-serif]">有个大额卖单</span>
      </div>

      {/* pointer */}
      <svg className="absolute left-[3729px] top-[1298px]" width="34" height="56" viewBox="0 0 34 56">
        <path d="M2 2V43L11 35L18 53L25 50L18 32H30Z" fill="#f2f2f2" stroke="#222" strokeWidth="2" />
      </svg>
    </div>
  );
}
